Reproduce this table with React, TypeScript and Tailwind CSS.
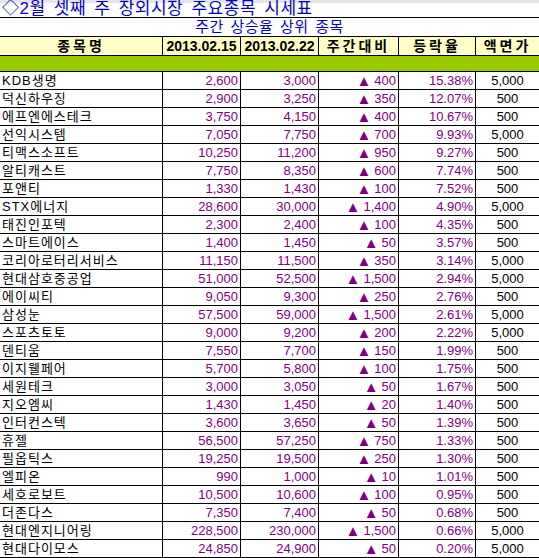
import React from 'react';

type Row = [string, string, string, string, string, string];

const rows: Row[] = [
  ['KDB생명', '2,600', '3,000', '400', '15.38%', '5,000'],
  ['덕신하우징', '2,900', '3,250', '350', '12.07%', '500'],
  ['에프엔에스테크', '3,750', '4,150', '400', '10.67%', '500'],
  ['선익시스템', '7,050', '7,750', '700', '9.93%', '5,000'],
  ['티맥스소프트', '10,250', '11,200', '950', '9.27%', '500'],
  ['알티캐스트', '7,750', '8,350', '600', '7.74%', '500'],
  ['포앤티', '1,330', '1,430', '100', '7.52%', '500'],
  ['STX에너지', '28,600', '30,000', '1,400', '4.90%', '5,000'],
  ['태진인포텍', '2,300', '2,400', '100', '4.35%', '500'],
  ['스마트에이스', '1,400', '1,450', '50', '3.57%', '500'],
  ['코리아로터리서비스', '11,150', '11,500', '350', '3.14%', '5,000'],
  ['현대삼호중공업', '51,000', '52,500', '1,500', '2.94%', '5,000'],
  ['에이씨티', '9,050', '9,300', '250', '2.76%', '500'],
  ['삼성눈', '57,500', '59,000', '1,500', '2.61%', '5,000'],
  ['스포츠토토', '9,000', '9,200', '200', '2.22%', '5,000'],
  ['덴티움', '7,550', '7,700', '150', '1.99%', '500'],
  ['이지웰페어', '5,700', '5,800', '100', '1.75%', '500'],
  ['세원테크', '3,000', '3,050', '50', '1.67%', '500'],
  ['지오엠씨', '1,430', '1,450', '20', '1.40%', '500'],
  ['인터컨스텍', '3,600', '3,650', '50', '1.39%', '500'],
  ['휴젤', '56,500', '57,250', '750', '1.33%', '500'],
  ['필옵틱스', '19,250', '19,500', '250', '1.30%', '500'],
  ['엘피온', '990', '1,000', '10', '1.01%', '500'],
  ['세호로보트', '10,500', '10,600', '100', '0.95%', '500'],
  ['더존다스', '7,350', '7,400', '50', '0.68%', '500'],
  ['현대엔지니어링', '228,500', '230,000', '1,500', '0.66%', '5,000'],
  ['현대다이모스', '24,850', '24,900', '50', '0.20%', '5,000'],
];

const headers = ['종목명', '2013.02.15', '2013.02.22', '주간대비', '등락율', '액면가'];

const font = { fontFamily: '"Liberation Sans", "Noto Sans CJK KR", sans-serif' };

const cols = 'grid grid-cols-[162px_78px_78px_80px_77px_64px]';
const cell = 'flex items-center overflow-hidden whitespace-nowrap border-b border-black';

export default function App() {
  return (
    <div className="w-[539px] h-[558px] overflow-hidden bg-white text-black" style={font}>
      <div className="h-[18px] flex items-center border-b border-black bg-[linear-gradient(#e4e4ec_0,#e4e4ec_3px,#ffffff_3px)] pl-[2px] text-[17px] text-[#0000cc] tracking-[0.5px] [word-spacing:3px]">
        ◇2월 셋째 주 장외시장 주요종목 시세표
      </div>
      <div className="h-[19px] flex items-center justify-center border-b border-black text-[15px] text-[#0000cc] tracking-[0.5px] [word-spacing:2px]">
        주간 상승율 상위 종목
      </div>
      <div className={`${cols} h-[19px] bg-[#ffffc6]`}>
        {headers.map((h, i) => (
          <div
            key={h}
            className={`${cell} justify-center font-bold text-[14px] ${i > 0 ? 'border-l' : ''} ${i === 0 || i > 2 ? 'tracking-[3px]' : ''}`}
          >
            {h}
          </div>
        ))}
      </div>
      <div className="h-[16px] bg-[#99cc00] border-b border-black" />
      {rows.map((r) => (
        <div key={r[0]} className={`${cols} h-[18px] text-[13px]`}>
          <div className={`${cell} pl-[2px] tracking-[1px]`}>{r[0]}</div>
          <div className={`${cell} border-l justify-end pr-[2px] text-[#800080]`}>{r[1]}</div>
          <div className={`${cell} border-l justify-end pr-[2px] text-[#800080]`}>{r[2]}</div>
          <div className={`${cell} border-l justify-end pr-[2px] text-[#800080] gap-[3px]`}>
            <span className="text-[15px] leading-none">▲</span>
            <span>{r[3]}</span>
          </div>
          <div className={`${cell} border-l justify-end pr-[2px] text-[#800080]`}>{r[4]}</div>
          <div className={`${cell} border-l justify-center`}>{r[5]}</div>
        </div>
      ))}
    </div>
  );
}
